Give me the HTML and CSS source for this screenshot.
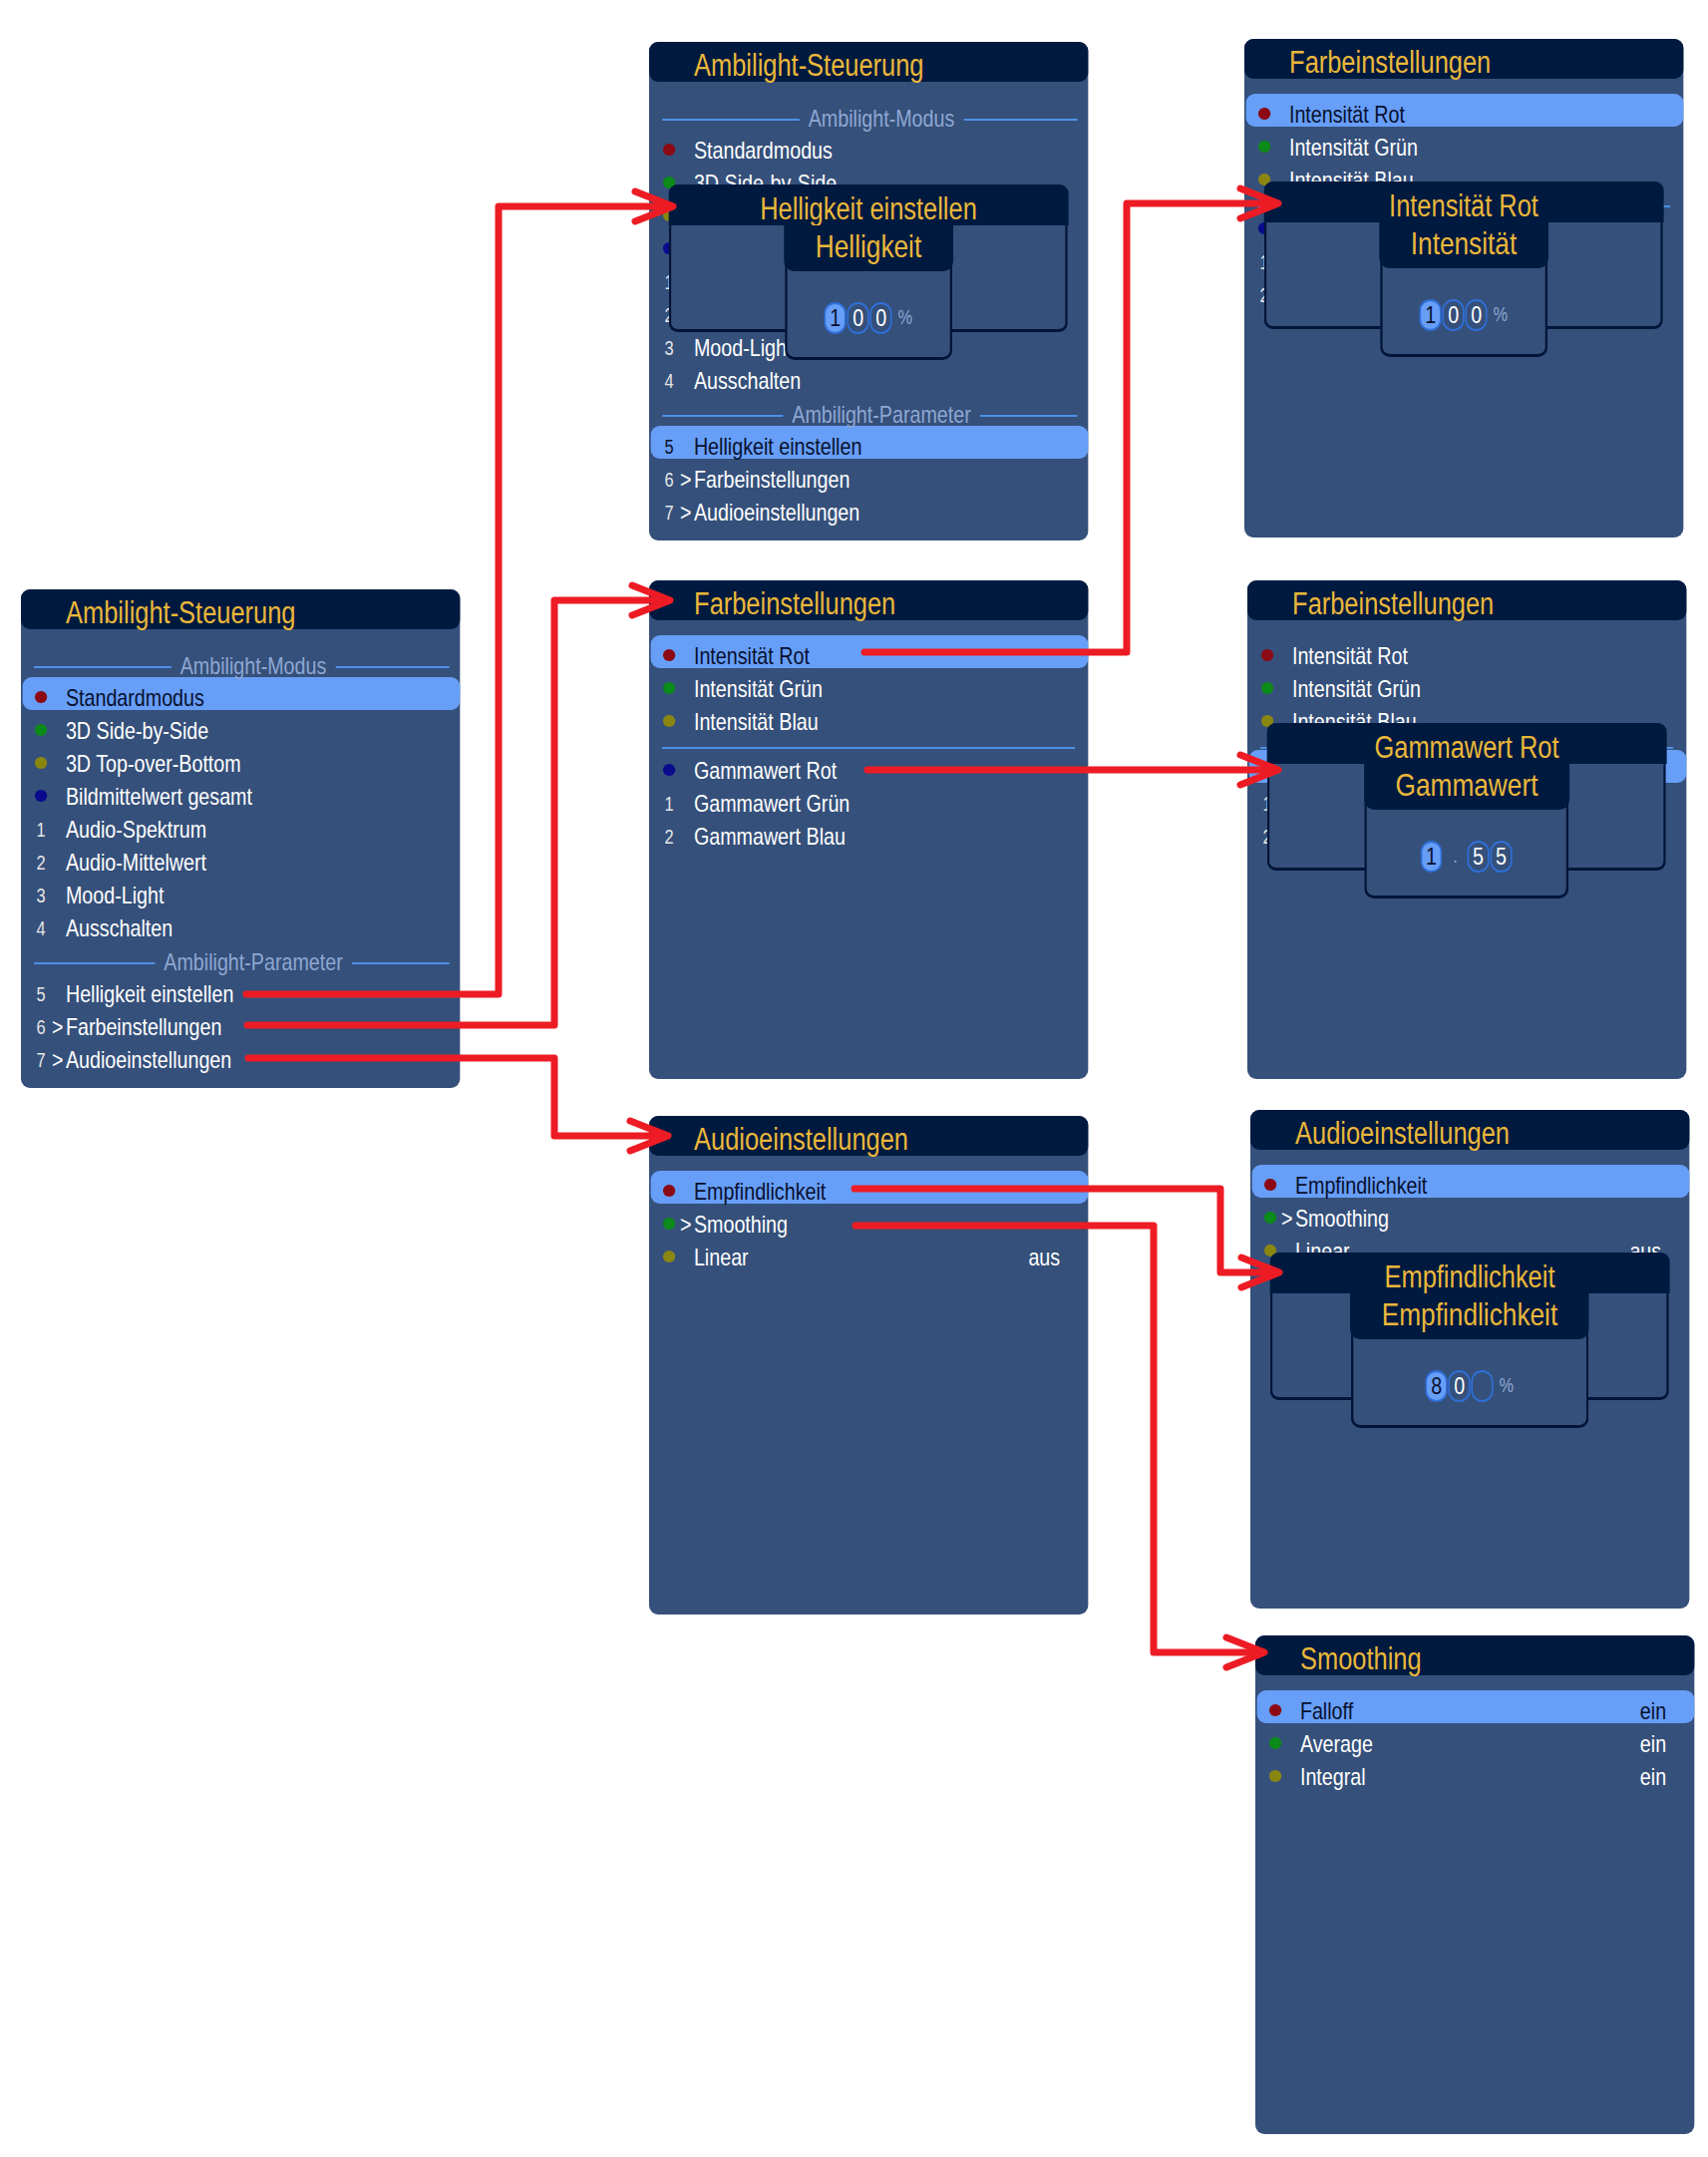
FILE: index.html
```html
<!DOCTYPE html>
<html lang="de">
<head>
<meta charset="utf-8">
<title>Ambilight-Steuerung Menüstruktur</title>
<link rel="stylesheet" href="styles.css">
</head>
<body>
<div class="canvas">

  <!-- P1: Ambilight-Steuerung (main) -->
  <section class="panel p1">
    <div class="head"><div class="title">Ambilight-Steuerung</div></div>
    <div class="list">
      <div class="sec"><i class="ln l"></i><span class="lbl">Ambilight-Modus</span><i class="ln r"></i></div>
      <div class="row sel"><span class="mk"><b class="dot red"></b></span><span class="pre"></span><span class="txt">Standardmodus</span></div>
      <div class="row"><span class="mk"><b class="dot green"></b></span><span class="pre"></span><span class="txt">3D Side-by-Side</span></div>
      <div class="row"><span class="mk"><b class="dot olive"></b></span><span class="pre"></span><span class="txt">3D Top-over-Bottom</span></div>
      <div class="row"><span class="mk"><b class="dot blue"></b></span><span class="pre"></span><span class="txt">Bildmittelwert gesamt</span></div>
      <div class="row"><span class="mk"><span class="num">1</span></span><span class="pre"></span><span class="txt">Audio-Spektrum</span></div>
      <div class="row"><span class="mk"><span class="num">2</span></span><span class="pre"></span><span class="txt">Audio-Mittelwert</span></div>
      <div class="row"><span class="mk"><span class="num">3</span></span><span class="pre"></span><span class="txt">Mood-Light</span></div>
      <div class="row"><span class="mk"><span class="num">4</span></span><span class="pre"></span><span class="txt">Ausschalten</span></div>
      <div class="sec"><i class="ln l"></i><span class="lbl">Ambilight-Parameter</span><i class="ln r"></i></div>
      <div class="row"><span class="mk"><span class="num">5</span></span><span class="pre"></span><span class="txt">Helligkeit einstellen</span></div>
      <div class="row"><span class="mk"><span class="num">6</span></span><span class="pre">&gt;</span><span class="txt">Farbeinstellungen</span></div>
      <div class="row"><span class="mk"><span class="num">7</span></span><span class="pre">&gt;</span><span class="txt">Audioeinstellungen</span></div>
    </div>
  </section>

  <!-- P2: Ambilight-Steuerung with Helligkeit dialog -->
  <section class="panel p2">
    <div class="head"><div class="title">Ambilight-Steuerung</div></div>
    <div class="list">
      <div class="sec"><i class="ln l"></i><span class="lbl">Ambilight-Modus</span><i class="ln r"></i></div>
      <div class="row"><span class="mk"><b class="dot red"></b></span><span class="pre"></span><span class="txt">Standardmodus</span></div>
      <div class="row"><span class="mk"><b class="dot green"></b></span><span class="pre"></span><span class="txt">3D Side-by-Side</span></div>
      <div class="row"><span class="mk"><b class="dot olive"></b></span><span class="pre"></span><span class="txt">3D Top-over-Bottom</span></div>
      <div class="row"><span class="mk"><b class="dot blue"></b></span><span class="pre"></span><span class="txt">Bildmittelwert gesamt</span></div>
      <div class="row"><span class="mk"><span class="num">1</span></span><span class="pre"></span><span class="txt">Audio-Spektrum</span></div>
      <div class="row"><span class="mk"><span class="num">2</span></span><span class="pre"></span><span class="txt">Audio-Mittelwert</span></div>
      <div class="row"><span class="mk"><span class="num">3</span></span><span class="pre"></span><span class="txt">Mood-Light</span></div>
      <div class="row"><span class="mk"><span class="num">4</span></span><span class="pre"></span><span class="txt">Ausschalten</span></div>
      <div class="sec"><i class="ln l"></i><span class="lbl">Ambilight-Parameter</span><i class="ln r"></i></div>
      <div class="row sel"><span class="mk"><span class="num">5</span></span><span class="pre"></span><span class="txt">Helligkeit einstellen</span></div>
      <div class="row"><span class="mk"><span class="num">6</span></span><span class="pre">&gt;</span><span class="txt">Farbeinstellungen</span></div>
      <div class="row"><span class="mk"><span class="num">7</span></span><span class="pre">&gt;</span><span class="txt">Audioeinstellungen</span></div>
    </div>
    <div class="pop">
      <div class="pop-head"><div class="title">Helligkeit einstellen</div></div>
      <div class="dlg">
        <div class="dlg-head"><div class="title">Helligkeit</div></div>
        <div class="dlg-body"><span class="dg on">1</span><span class="dg">0</span><span class="dg">0</span><span class="pct">%</span></div>
      </div>
    </div>
  </section>

  <!-- P3: Farbeinstellungen with Intensität dialog -->
  <section class="panel p3">
    <div class="head"><div class="title">Farbeinstellungen</div></div>
    <div class="list">
      <div class="row sel"><span class="mk"><b class="dot red"></b></span><span class="pre"></span><span class="txt">Intensität Rot</span></div>
      <div class="row"><span class="mk"><b class="dot green"></b></span><span class="pre"></span><span class="txt">Intensität Grün</span></div>
      <div class="row"><span class="mk"><b class="dot olive"></b></span><span class="pre"></span><span class="txt">Intensität Blau</span></div>
      <div class="sep"><i></i></div>
      <div class="row"><span class="mk"><b class="dot blue"></b></span><span class="pre"></span><span class="txt">Gammawert Rot</span></div>
      <div class="row"><span class="mk"><span class="num">1</span></span><span class="pre"></span><span class="txt">Gammawert Grün</span></div>
      <div class="row"><span class="mk"><span class="num">2</span></span><span class="pre"></span><span class="txt">Gammawert Blau</span></div>
    </div>
    <div class="pop">
      <div class="pop-head"><div class="title">Intensität Rot</div></div>
      <div class="dlg">
        <div class="dlg-head"><div class="title">Intensität</div></div>
        <div class="dlg-body"><span class="dg on">1</span><span class="dg">0</span><span class="dg">0</span><span class="pct">%</span></div>
      </div>
    </div>
  </section>

  <!-- P4: Farbeinstellungen -->
  <section class="panel p4">
    <div class="head"><div class="title">Farbeinstellungen</div></div>
    <div class="list">
      <div class="row sel"><span class="mk"><b class="dot red"></b></span><span class="pre"></span><span class="txt">Intensität Rot</span></div>
      <div class="row"><span class="mk"><b class="dot green"></b></span><span class="pre"></span><span class="txt">Intensität Grün</span></div>
      <div class="row"><span class="mk"><b class="dot olive"></b></span><span class="pre"></span><span class="txt">Intensität Blau</span></div>
      <div class="sep"><i></i></div>
      <div class="row"><span class="mk"><b class="dot blue"></b></span><span class="pre"></span><span class="txt">Gammawert Rot</span></div>
      <div class="row"><span class="mk"><span class="num">1</span></span><span class="pre"></span><span class="txt">Gammawert Grün</span></div>
      <div class="row"><span class="mk"><span class="num">2</span></span><span class="pre"></span><span class="txt">Gammawert Blau</span></div>
    </div>
  </section>

  <!-- P5: Farbeinstellungen with Gammawert dialog -->
  <section class="panel p5">
    <div class="head"><div class="title">Farbeinstellungen</div></div>
    <div class="list">
      <div class="row"><span class="mk"><b class="dot red"></b></span><span class="pre"></span><span class="txt">Intensität Rot</span></div>
      <div class="row"><span class="mk"><b class="dot green"></b></span><span class="pre"></span><span class="txt">Intensität Grün</span></div>
      <div class="row"><span class="mk"><b class="dot olive"></b></span><span class="pre"></span><span class="txt">Intensität Blau</span></div>
      <div class="sep"><i></i></div>
      <div class="row sel"><span class="mk"><b class="dot blue"></b></span><span class="pre"></span><span class="txt">Gammawert Rot</span></div>
      <div class="row"><span class="mk"><span class="num">1</span></span><span class="pre"></span><span class="txt">Gammawert Grün</span></div>
      <div class="row"><span class="mk"><span class="num">2</span></span><span class="pre"></span><span class="txt">Gammawert Blau</span></div>
    </div>
    <div class="pop">
      <div class="pop-head"><div class="title">Gammawert Rot</div></div>
      <div class="dlg">
        <div class="dlg-head"><div class="title">Gammawert</div></div>
        <div class="dlg-body"><span class="dg on">1</span><span class="dp">.</span><span class="dg">5</span><span class="dg">5</span></div>
      </div>
    </div>
  </section>

  <!-- P6: Audioeinstellungen -->
  <section class="panel p6">
    <div class="head"><div class="title">Audioeinstellungen</div></div>
    <div class="list">
      <div class="row sel"><span class="mk"><b class="dot red"></b></span><span class="pre"></span><span class="txt">Empfindlichkeit</span></div>
      <div class="row"><span class="mk"><b class="dot green"></b></span><span class="pre">&gt;</span><span class="txt">Smoothing</span></div>
      <div class="row"><span class="mk"><b class="dot olive"></b></span><span class="pre"></span><span class="txt">Linear</span><span class="val">aus</span></div>
    </div>
  </section>

  <!-- P7: Audioeinstellungen with Empfindlichkeit dialog -->
  <section class="panel p7">
    <div class="head"><div class="title">Audioeinstellungen</div></div>
    <div class="list">
      <div class="row sel"><span class="mk"><b class="dot red"></b></span><span class="pre"></span><span class="txt">Empfindlichkeit</span></div>
      <div class="row"><span class="mk"><b class="dot green"></b></span><span class="pre">&gt;</span><span class="txt">Smoothing</span></div>
      <div class="row"><span class="mk"><b class="dot olive"></b></span><span class="pre"></span><span class="txt">Linear</span><span class="val">aus</span></div>
    </div>
    <div class="pop">
      <div class="pop-head"><div class="title">Empfindlichkeit</div></div>
      <div class="dlg">
        <div class="dlg-head"><div class="title">Empfindlichkeit</div></div>
        <div class="dlg-body"><span class="dg on">8</span><span class="dg">0</span><span class="dg"></span><span class="pct">%</span></div>
      </div>
    </div>
  </section>

  <!-- P8: Smoothing -->
  <section class="panel p8">
    <div class="head"><div class="title">Smoothing</div></div>
    <div class="list">
      <div class="row sel"><span class="mk"><b class="dot red"></b></span><span class="pre"></span><span class="txt">Falloff</span><span class="val">ein</span></div>
      <div class="row"><span class="mk"><b class="dot green"></b></span><span class="pre"></span><span class="txt">Average</span><span class="val">ein</span></div>
      <div class="row"><span class="mk"><b class="dot olive"></b></span><span class="pre"></span><span class="txt">Integral</span><span class="val">ein</span></div>
    </div>
  </section>

  <!-- connector arrows -->
  <svg class="arrows" width="1713" height="2163" viewBox="0 0 1713 2163" aria-hidden="true">
    <g fill="none" stroke="#ed1c24" stroke-width="7" stroke-linecap="round" stroke-linejoin="round">
      <path d="M247 997 H500 V207 H673"/>
      <path d="M637 192 L675 207 L637 222"/>
      <path d="M248 1028 H556 V602 H670"/>
      <path d="M634 587 L672 602 L634 617"/>
      <path d="M249 1061 H556 V1139 H668"/>
      <path d="M632 1124 L670 1139 L632 1154"/>
      <path d="M867 654 H1130 V204 H1280"/>
      <path d="M1244 189 L1282 204 L1244 219"/>
      <path d="M870 772 H1280"/>
      <path d="M1244 757 L1282 772 L1244 787"/>
      <path d="M857 1192 H1224 V1276 H1281"/>
      <path d="M1245 1261 L1283 1276 L1245 1291"/>
      <path d="M858 1229 H1157 V1657 H1266"/>
      <path d="M1230 1642 L1268 1657 L1230 1672"/>
    </g>
  </svg>
</div>
</body>
</html>
```

FILE: styles.css
```css
html, body {
  margin: 0;
  padding: 0;
  background: #ffffff;
}

body {
  font-family: "Liberation Sans", Arial, sans-serif;
}

.canvas {
  position: relative;
  width: 1713px;
  height: 2163px;
  overflow: hidden;
}

/* ---------- panels (diagram nodes) ----------
   The source screenshots are horizontally squeezed TV menus; each panel is
   laid out at full width and compressed to 82% horizontally. */
.panel {
  position: absolute;
  width: 536.6px;
  height: 500px;
  background: #35507a;
  border-radius: 11px / 9px;
  transform: scaleX(0.82);
  transform-origin: 0 0;
}
.p1 { left: 21px;   top: 591px; }
.p2 { left: 651px;  top: 42px; }
.p3 { left: 1248px; top: 39px; }
.p4 { left: 651px;  top: 582px; }
.p5 { left: 1251px; top: 582px; }
.p6 { left: 651px;  top: 1119px; }
.p7 { left: 1254px; top: 1113px; }
.p8 { left: 1259px; top: 1640px; }

.head {
  height: 40px;
  background: #001a3f;
  border-radius: 11px / 9px;
  padding-left: 55px;
  box-sizing: border-box;
}

.title {
  font-size: 31px;
  line-height: 32px;
  padding-top: 8px;
  color: #ebb73a;
  white-space: nowrap;
}

.list {
  padding-top: 15px;
}

/* ---------- rows ---------- */
.row {
  display: flex;
  align-items: flex-start;
  height: 33px;
  padding-left: 14.6px;
  color: #ffffff;
  font-size: 24px;
  white-space: nowrap;
}
.row.sel {
  margin-left: 2.4px;
  padding-left: 12.2px;
  background: #679ef7;
  border-radius: 11px / 9px;
  color: #08102e;
}

.mk {
  width: 19.5px;
  display: flex;
  justify-content: center;
}
.dot {
  display: block;
  width: 14.6px;
  height: 12px;
  border-radius: 50%;
  margin-top: 14px;
}
.red   { background: #8c0a14; }
.green { background: #0c8a1a; }
.olive { background: #8a8612; }
.blue  { background: #0a0a8c; }

.num {
  font-size: 20px;
  line-height: 33px;
  padding-top: 5px;
  color: #e6e6e6;
}
.row.sel .num { color: #08102e; }

.pre {
  width: 20.7px;
  padding-left: 3.7px;
  box-sizing: border-box;
  line-height: 33px;
  padding-top: 4px;
}
.txt {
  line-height: 33px;
  padding-top: 4px;
}
.val {
  margin-left: auto;
  padding-right: 34px;
  line-height: 33px;
  padding-top: 4px;
}

/* section header with flanking lines */
.sec {
  display: flex;
  align-items: flex-start;
  height: 33px;
  padding: 0 12.2px 0 15.9px;
  font-size: 24px;
  color: #8ea7d3;
}
.sec .ln {
  height: 2px;
  background: #4d90e8;
  margin-top: 22px;
}
.sec .ln.l { flex: 1 1 28px; }
.sec .ln.r { flex: 1 1 0; }
.sec .lbl {
  line-height: 21px;
  padding-top: 11px;
  margin: 0 11px;
  white-space: nowrap;
}

/* plain separator */
.sep {
  height: 16px;
  padding: 13px 15.9px 0;
  box-sizing: border-box;
}
.sep i {
  display: block;
  height: 2px;
  background: #4d90e8;
}

/* ---------- popup dialogs (overlay) ---------- */
.pop {
  position: absolute;
  left: 24.4px;
  top: 143px;
  width: 487.8px;
  height: 148px;
  box-sizing: border-box;
  border-style: solid;
  border-color: #001538;
  border-width: 0 3.66px 3px;
  border-radius: 11px / 9px;
  background: #35507a;
  display: flex;
  flex-direction: column;
  align-items: center;
}
.pop-head {
  align-self: stretch;
  margin: 0 -3.66px;
  height: 41px;
  flex: none;
  background: #001a3f;
  border-radius: 11px 11px 0 0 / 9px 9px 0 0;
  text-align: center;
}
.pop-head .title {
  padding-top: 9px;
}

.dlg {
  flex: none;
  height: 135px;
  box-sizing: border-box;
  border-style: solid;
  border-color: #001538;
  border-width: 0 3.66px 3px;
  border-radius: 0 0 12px 12px / 0 0 10px 10px;
  background: #35507a;
  display: flex;
  flex-direction: column;
}
.dlg-head {
  height: 46px;
  flex: none;
  margin: 0 -3.66px;
  padding: 0 38.4px;
  background: #001a3f;
  border-radius: 0 0 12px 12px / 0 0 10px 10px;
  text-align: center;
}
.dlg-head .title {
  font-size: 32px;
  padding-top: 5px;
}
.dlg-body {
  flex: 1;
  display: flex;
  align-items: center;
  justify-content: center;
  padding-top: 7px;
}

.dg {
  width: 26.8px;
  height: 32px;
  box-sizing: border-box;
  border-style: solid;
  border-color: #2f6fd8;
  border-width: 2px 2.44px;
  border-radius: 13.4px / 11px;
  margin-right: 1.2px;
  font-size: 24px;
  line-height: 28px;
  text-align: center;
  color: #ffffff;
}
.dg.on {
  background: #679ef7;
  color: #08102e;
}
.pct {
  font-size: 20px;
  color: #8ea7d3;
  margin-left: 6px;
}
.dp {
  width: 29.3px;
  font-size: 20px;
  color: #8ea7d3;
  text-align: center;
}

/* ---------- arrows overlay ---------- */
.arrows {
  position: absolute;
  left: 0;
  top: 0;
  pointer-events: none;
}
```
